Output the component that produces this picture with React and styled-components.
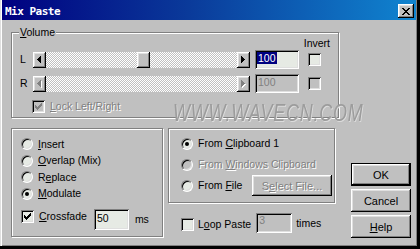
import React from 'react';
import styled, { createGlobalStyle, css } from 'styled-components';

const GlobalStyle = createGlobalStyle`
  html, body { margin: 0; padding: 0; }
  body {
    background: #c0c0c0;
    font-family: "Liberation Sans", Arial, sans-serif;
    font-size: 10.5px;
    color: #000;
  }
  * { box-sizing: border-box; }
`;

const raised = css`
  background: #c0c0c0;
  box-shadow: inset -1px -1px #000, inset 1px 1px #fff, inset -2px -2px #808080, inset 2px 2px #dfdfdf;
`;

const sunken = css`
  box-shadow: inset 1px 1px #808080, inset -1px -1px #fff, inset 2px 2px #000, inset -2px -2px #dfdfdf;
`;

const etchedText = css`
  color: #808080;
  text-shadow: 1px 1px 0 #fff;
`;

const FIELD_BG = '#e6eae4';

const Window = styled.div`
  position: relative;
  width: 420px;
  height: 249px;
  display: flex;
  flex-direction: column;
  background: #c0c0c0;
  padding: 0 4px 4px 2px;
  box-shadow: inset -3px -3px #000, inset 1px 0 #dfdfdf, inset 2px 0 #fff, inset -4px -4px #808080;
  overflow: hidden;
`;

const TitleBar = styled.div`
  flex: none;
  height: 20px;
  display: flex;
  align-items: flex-start;
  background: linear-gradient(90deg, #000080 0%, #0a3a9a 45%, #1084d0 100%);
  padding: 0 2px 0 3px;
`;

const TitleText = styled.div`
  flex: 1;
  margin-top: 6px;
  color: #fff;
  font: bold 11px/11px "DejaVu Sans Mono", monospace;
  letter-spacing: -0.5px;
`;

const CloseButton = styled.div`
  flex: none;
  margin-top: 4px;
  width: 16px;
  height: 14px;
  display: flex;
  align-items: center;
  justify-content: center;
  ${raised};
`;

const Body = styled.div`
  flex: 1;
  display: flex;
  flex-direction: column;
  align-items: flex-start;
  padding: 12px 0 0 9px;
`;

const Group = styled.div`
  position: relative;
  flex: none;
  width: ${p => p.$w}px;
  height: ${p => p.$h}px;
  border: 1px solid #808080;
  box-shadow: inset 1px 1px #fff, 1px 1px #fff;
  padding: ${p => p.$pad};
  display: flex;
  flex-direction: column;
  align-items: ${p => p.$stretch ? 'stretch' : 'flex-start'};
`;

const Legend = styled.span`
  position: absolute;
  left: 7px;
  top: -7px;
  padding: 0 1px;
  background: #c0c0c0;
  line-height: 12px;
`;

const HeaderRow = styled.div`
  align-self: stretch;
  height: 13px;
  line-height: 13px;
  display: flex;
  justify-content: flex-end;
  padding-right: 8px;
`;

const SliderRow = styled.div`
  display: flex;
  align-items: center;
  height: 19px;
  margin-top: ${p => p.$mt || 0}px;
`;

const RowLabel = styled.span`
  width: 13px;
  line-height: 13px;
`;

const ScrollBar = styled.div`
  width: 217px;
  height: 16px;
  display: flex;
`;

const ScrollTrack = styled.div`
  flex: 1;
  display: flex;
  background-color: #fff;
  background-image: conic-gradient(#c0c0c0 25%, #fff 0 50%, #c0c0c0 0 75%, #fff 0);
  background-size: 2px 2px;
`;

const ScrollButton = styled.div`
  flex: none;
  width: 13px;
  height: 16px;
  display: flex;
  align-items: center;
  justify-content: center;
  ${raised};
`;

const Thumb = styled.div`
  flex: none;
  width: 13px;
  height: 16px;
  margin-left: ${p => p.$offset}px;
  ${raised};
`;

const TextBox = styled.div`
  flex: none;
  width: ${p => p.$w}px;
  height: ${p => p.$h}px;
  margin-left: ${p => p.$ml || 0}px;
  margin-top: ${p => p.$mt || 0}px;
  padding: ${p => p.$pt}px 2px 0 ${p => p.$pl}px;
  line-height: 13px;
  white-space: nowrap;
  background: ${p => p.$disabled ? '#c0c0c0' : FIELD_BG};
  color: ${p => p.$disabled ? '#808080' : '#000'};
  ${sunken};
`;

const Selected = styled.span`
  background: #000080;
  color: #fff;
  padding: 0 1px;
`;

const CheckBox = styled.span`
  flex: none;
  width: 13px;
  height: 13px;
  margin-left: ${p => p.$ml || 0}px;
  display: inline-flex;
  align-items: center;
  justify-content: center;
  background: ${p => p.$disabled ? '#c0c0c0' : FIELD_BG};
  ${sunken};
`;

const RadioDot = styled.span`
  position: relative;
  flex: none;
  width: 12px;
  height: 12px;
  border-radius: 50%;
  border: 1px solid;
  border-color: #808080 #fff #fff #808080;
  background: ${p => p.$disabled ? '#c0c0c0' : FIELD_BG};
  box-shadow: inset 1px 1px #000, inset -1px -1px #dfdfdf;
  ${p => p.$checked && css`
    &::after {
      content: '';
      position: absolute;
      left: 3px;
      top: 3px;
      width: 4px;
      height: 4px;
      border-radius: 50%;
      background: ${p.$disabled ? '#808080' : '#000'};
    }
  `}
`;

const Field = styled.label`
  display: flex;
  align-items: center;
  gap: ${p => p.$gap ?? 5}px;
  height: ${p => p.$h}px;
  margin-top: ${p => p.$mt || 0}px;
  margin-left: ${p => p.$ml || 0}px;
  flex: none;
`;

const Text = styled.span`
  line-height: 13px;
  white-space: nowrap;
  margin-top: ${p => p.$mt || 0}px;
  margin-left: ${p => p.$ml || 0}px;
  ${p => p.$disabled && etchedText};
`;

const BottomRow = styled.div`
  display: flex;
  align-items: flex-start;
  margin-top: 10px;
`;

const FlowRow = styled.div`
  display: flex;
  align-items: flex-start;
  height: ${p => p.$h}px;
  margin-top: ${p => p.$mt || 0}px;
  padding-left: ${p => p.$pl || 0}px;
`;

const MidColumn = styled.div`
  display: flex;
  flex-direction: column;
  margin-left: 5px;
  width: 167px;
`;

const SourceRow = styled.div`
  display: flex;
  align-items: center;
  height: 21px;
`;

const ButtonColumn = styled.div`
  display: flex;
  flex-direction: column;
  gap: 3px;
  margin-left: 16px;
  margin-top: 35px;
`;

const Button = styled.div`
  width: ${p => p.$w || 60}px;
  height: ${p => p.$h || 23}px;
  margin-left: ${p => p.$auto ? 'auto' : '0'};
  display: flex;
  align-items: center;
  justify-content: center;
  font-size: 11px;
  ${raised};
  ${p => p.$default && css`
    box-shadow: inset 0 0 0 1px #000, inset -2px -2px #000, inset 2px 2px #fff, inset -3px -3px #808080, inset 3px 3px #dfdfdf;
  `}
  ${p => p.$disabled && etchedText};
`;

const Watermark = styled.div`
  position: absolute;
  left: 173px;
  top: 101px;
  font: italic 24px/24px "Liberation Sans", Arial, sans-serif;
  letter-spacing: 1px;
  color: #9c9c9c;
  text-shadow: 1px 1px 0 #dcdcdc;
  white-space: nowrap;
  transform: scaleX(0.75);
  transform-origin: left top;
  pointer-events: none;
`;

const CheckMark = ({ color = '#000' }) => (
  <svg width="7" height="7" viewBox="0 0 7 7" shapeRendering="crispEdges">
    <path fill={color} d="M0 2h1v3H0z M1 3h1v3H1z M2 4h1v3H2z M3 3h1v3H3z M4 2h1v3H4z M5 1h1v3H5z M6 0h1v3H6z" />
  </svg>
);

const ArrowGlyph = ({ dir, disabled }) => {
  const d = dir === 'left'
    ? 'M0 3h1v1H0z M1 2h1v3H1z M2 1h1v5H2z M3 0h1v7H3z'
    : 'M3 3h1v1H3z M2 2h1v3H2z M1 1h1v5H1z M0 0h1v7H0z';
  return (
    <svg width="5" height="8" viewBox="0 0 5 8" shapeRendering="crispEdges">
      {disabled && <path fill="#fff" d={d} transform="translate(1 1)" />}
      <path fill={disabled ? '#808080' : '#000'} d={d} />
    </svg>
  );
};

const CloseGlyph = () => (
  <svg width="8" height="7" viewBox="0 0 8 7" shapeRendering="crispEdges">
    <path fill="#000" d="M0 0h2v1H0z M6 0h2v1H6z M1 1h2v1H1z M5 1h2v1H5z M2 2h4v1H2z M3 3h2v1H3z M2 4h4v1H2z M1 5h2v1H1z M5 5h2v1H5z M0 6h2v1H0z M6 6h2v1H6z" />
  </svg>
);

const Slider = ({ disabled, offset }) => (
  <ScrollBar>
    <ScrollButton><ArrowGlyph dir="left" disabled={disabled} /></ScrollButton>
    <ScrollTrack>{!disabled && <Thumb $offset={offset} />}</ScrollTrack>
    <ScrollButton><ArrowGlyph dir="right" disabled={disabled} /></ScrollButton>
  </ScrollBar>
);

const Check = ({ checked, disabled, ml }) => (
  <CheckBox $disabled={disabled} $ml={ml}>
    {checked && <CheckMark color={disabled ? '#808080' : '#000'} />}
  </CheckBox>
);

const RadioField = ({ checked, disabled, h, children }) => (
  <Field $h={h}>
    <RadioDot $checked={checked} $disabled={disabled} />
    <Text $disabled={disabled}>{children}</Text>
  </Field>
);

export default function App() {
  return (
    <>
      <GlobalStyle />
      <Window>
        <TitleBar>
          <TitleText>Mix Paste</TitleText>
          <CloseButton><CloseGlyph /></CloseButton>
        </TitleBar>
        <Body>
          <Group $w={328} $h={86} $pad="4px 0 0 8px">
            <Legend><u>V</u>olume</Legend>
            <HeaderRow><span>Invert</span></HeaderRow>
            <SliderRow>
              <RowLabel>L</RowLabel>
              <Slider offset={91} />
              <TextBox $w={44} $h={19} $ml={5} $pt={2} $pl={2}><Selected>100</Selected></TextBox>
              <Check ml={9} />
            </SliderRow>
            <SliderRow $mt={5}>
              <RowLabel>R</RowLabel>
              <Slider disabled />
              <TextBox $w={44} $h={19} $ml={5} $pt={2} $pl={3} $disabled>100</TextBox>
              <Check ml={9} disabled />
            </SliderRow>
            <Field $h={15} $mt={6} $ml={12}>
              <Check checked disabled />
              <Text $disabled><u>L</u>ock Left/Right</Text>
            </Field>
          </Group>

          <BottomRow>
            <Group $w={152} $h={109} $pad="7px 0 0 9px">
              <RadioField h={16.5}><u>I</u>nsert</RadioField>
              <RadioField h={16.5}><u>O</u>verlap (Mix)</RadioField>
              <RadioField h={16.5}>R<u>e</u>place</RadioField>
              <RadioField h={16.5} checked><u>M</u>odulate</RadioField>
              <FlowRow $h={21} $mt={7}>
                <Field $h={13} $mt={1} $gap={5}>
                  <Check checked />
                  <Text><u>C</u>rossfade</Text>
                </Field>
                <TextBox $w={35} $h={21} $ml={7} $pt={3} $pl={3}>50</TextBox>
                <Text $mt={4} $ml={6}>ms</Text>
              </FlowRow>
            </Group>

            <MidColumn>
              <Group $w={167} $h={75} $pad="4px 2px 0 12px" $stretch>
                <SourceRow>
                  <RadioField h={21} checked>From <u>C</u>lipboard 1</RadioField>
                </SourceRow>
                <SourceRow>
                  <RadioField h={21} disabled>From <u>W</u>indows Clipboard</RadioField>
                </SourceRow>
                <SourceRow>
                  <RadioField h={21}>From <u>F</u>ile</RadioField>
                  <Button $w={80} $h={21} $auto $disabled>S<u>e</u>lect File...</Button>
                </SourceRow>
              </Group>
              <FlowRow $h={20} $mt={10} $pl={13}>
                <Field $h={13} $mt={5} $gap={4}>
                  <Check />
                  <Text>L<u>o</u>op Paste</Text>
                </Field>
                <TextBox $w={36} $h={20} $ml={5} $pt={1} $pl={3} $disabled>3</TextBox>
                <Text $mt={4} $ml={4}>times</Text>
              </FlowRow>
            </MidColumn>

            <ButtonColumn>
              <Button $default>OK</Button>
              <Button>Cancel</Button>
              <Button><u>H</u>elp</Button>
            </ButtonColumn>
          </BottomRow>
        </Body>
        <Watermark>WWW.WAVECN.COM</Watermark>
      </Window>
    </>
  );
}
